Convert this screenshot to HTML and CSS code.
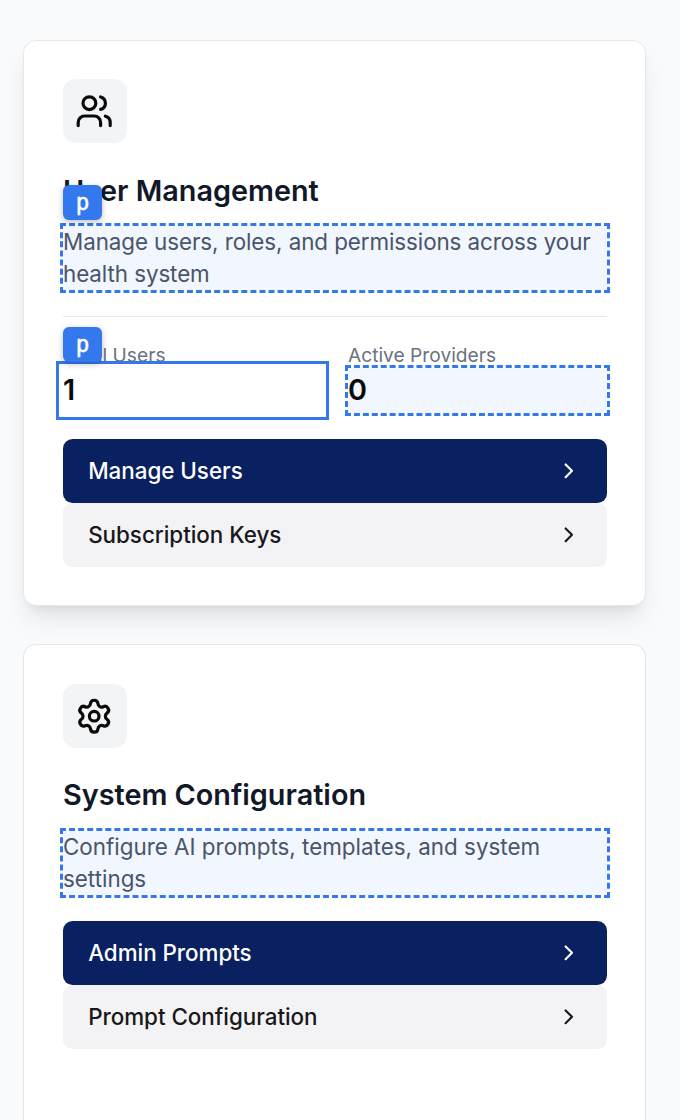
FILE: index.html
```html
<!DOCTYPE html>
<html lang="en">
<head>
<meta charset="utf-8">
<title>Administration</title>
<link rel="stylesheet" href="styles.css">
</head>
<body>
<main class="cards">
  <section class="card card-raised">
    <div class="card-icon">
      <svg viewBox="0 0 24 24"><path d="M16 21v-2a4 4 0 0 0-4-4H6a4 4 0 0 0-4 4v2"/><circle cx="9" cy="7" r="4"/><path d="M22 21v-2a4 4 0 0 0-3-3.87"/><path d="M16 3.128a4 4 0 0 1 0 7.744"/></svg>
    </div>
    <h2 class="title">User Management</h2>
    <p class="desc marked">Manage users, roles, and permissions across your health system<span class="tag">p</span></p>
    <div class="stats">
      <div class="stat">
        <div class="label">Total Users</div>
        <p class="value selected"><span class="number">1</span><span class="tag">p</span></p>
      </div>
      <div class="stat">
        <div class="label">Active Providers</div>
        <p class="value marked"><span class="number">0</span></p>
      </div>
    </div>
    <div class="actions">
      <a class="btn primary">Manage Users<svg viewBox="0 0 24 24"><path d="m9 18 6-6-6-6"/></svg></a>
      <a class="btn">Subscription Keys<svg viewBox="0 0 24 24"><path d="m9 18 6-6-6-6"/></svg></a>
    </div>
  </section>
  <section class="card card-tall">
    <div class="card-icon">
      <svg viewBox="0 0 24 24"><path d="M9.671 4.136a2.34 2.34 0 0 1 4.659 0 2.34 2.34 0 0 0 3.319 1.915 2.34 2.34 0 0 1 2.33 4.033 2.34 2.34 0 0 0 0 3.831 2.34 2.34 0 0 1-2.33 4.033 2.34 2.34 0 0 0-3.319 1.915 2.34 2.34 0 0 1-4.659 0 2.34 2.34 0 0 0-3.32-1.915 2.34 2.34 0 0 1-2.33-4.033 2.34 2.34 0 0 0 0-3.831A2.34 2.34 0 0 1 6.35 6.051a2.34 2.34 0 0 0 3.319-1.915"/><circle cx="12" cy="12" r="3"/></svg>
    </div>
    <h2 class="title">System Configuration</h2>
    <p class="desc marked">Configure AI prompts, templates, and system settings</p>
    <div class="actions">
      <a class="btn primary">Admin Prompts<svg viewBox="0 0 24 24"><path d="m9 18 6-6-6-6"/></svg></a>
      <a class="btn">Prompt Configuration<svg viewBox="0 0 24 24"><path d="m9 18 6-6-6-6"/></svg></a>
    </div>
  </section>
</main>
</body>
</html>
```
FILE: styles.css
```css
* { box-sizing: border-box; }
body {
  margin: 0;
  background: #f9fafc;
  font-family: Inter, sans-serif;
}
h2, p { margin: 0; }
svg {
  fill: none;
  stroke: currentColor;
  stroke-width: 2;
  stroke-linecap: round;
  stroke-linejoin: round;
}
.cards {
  display: flex;
  flex-direction: column;
  gap: 38px;
  height: 1120px;
  padding: 40px 34px 0 23px;
}
.card {
  padding: 38px 38px 38px 39px;
  background: #fff;
  border: 1px solid #e5e7eb;
  border-radius: 13px;
}
.card-raised {
  box-shadow: 0 16px 24px -5px rgba(0, 0, 0, .1), 0 6px 10px -6px rgba(0, 0, 0, .1);
}
.card-tall {
  flex: 1;
  padding-top: 39px;
  border-bottom: 0;
  border-radius: 13px 13px 0 0;
}
.card-icon {
  width: 64px;
  height: 64px;
  padding: 12.8px 12px;
  border-radius: 12.8px;
  background: #f3f4f6;
  color: #0a0a0a;
}
.card-icon svg { display: block; width: 38.4px; height: 38.4px; }
.title {
  margin-top: 25px;
  font-size: 28.8px;
  line-height: 45px;
  font-weight: 600;
  color: #111827;
}
.card-tall .title { margin-top: 24px; padding-bottom: 1px; }
.desc {
  position: relative;
  margin-top: 13px;
  font-size: 22.4px;
  line-height: 32px;
  color: #4a5568;
}
.card-raised .desc { letter-spacing: -.08px; }
.marked {
  background: #f1f6ff;
  outline: 3px dashed #3478ed;
}
.tag {
  position: absolute;
  left: 0;
  top: -41px;
  width: 39px;
  height: 35px;
  border-radius: 6px;
  background: #3478ed;
  color: #fff;
  font: 400 22.5px/34px "DejaVu Sans Mono", monospace;
  letter-spacing: 0;
  -webkit-text-stroke: .5px #fff;
  text-align: center;
  box-shadow: 0 2px 6px rgba(0, 0, 0, .25);
}
.stats {
  display: grid;
  grid-template-columns: 259px 259.5px;
  justify-content: space-between;
  margin-top: 26px;
  padding-top: 26px;
  border-top: 1px solid #e5e7eb;
}
.label {
  font-size: 19.2px;
  line-height: 25px;
  color: #6b7280;
}
.stat:last-child .label, .stat:last-child .number { padding-left: .5px; }
.value {
  position: relative;
  height: 45px;
  font-size: 28.8px;
  line-height: 43px;
  font-weight: 600;
  color: #0a0a0a;
}
.selected {
  background: #fff;
  outline: 3px solid #3478ed;
  outline-offset: 4px;
  box-shadow: 0 0 0 4px #fff;
}
.actions { margin-top: 26px; }
.btn {
  display: flex;
  align-items: center;
  justify-content: space-between;
  height: 64px;
  padding: 0 25.6px 0 25.2px;
  border-radius: 9.6px;
  background: #f3f3f5;
  color: #18181b;
  font-size: 22.4px;
  line-height: 62px;
  font-weight: 500;
  letter-spacing: -.03px;
}
.btn svg { width: 25.6px; height: 25.6px; }
.primary { background: #092061; color: #fff; }
```
